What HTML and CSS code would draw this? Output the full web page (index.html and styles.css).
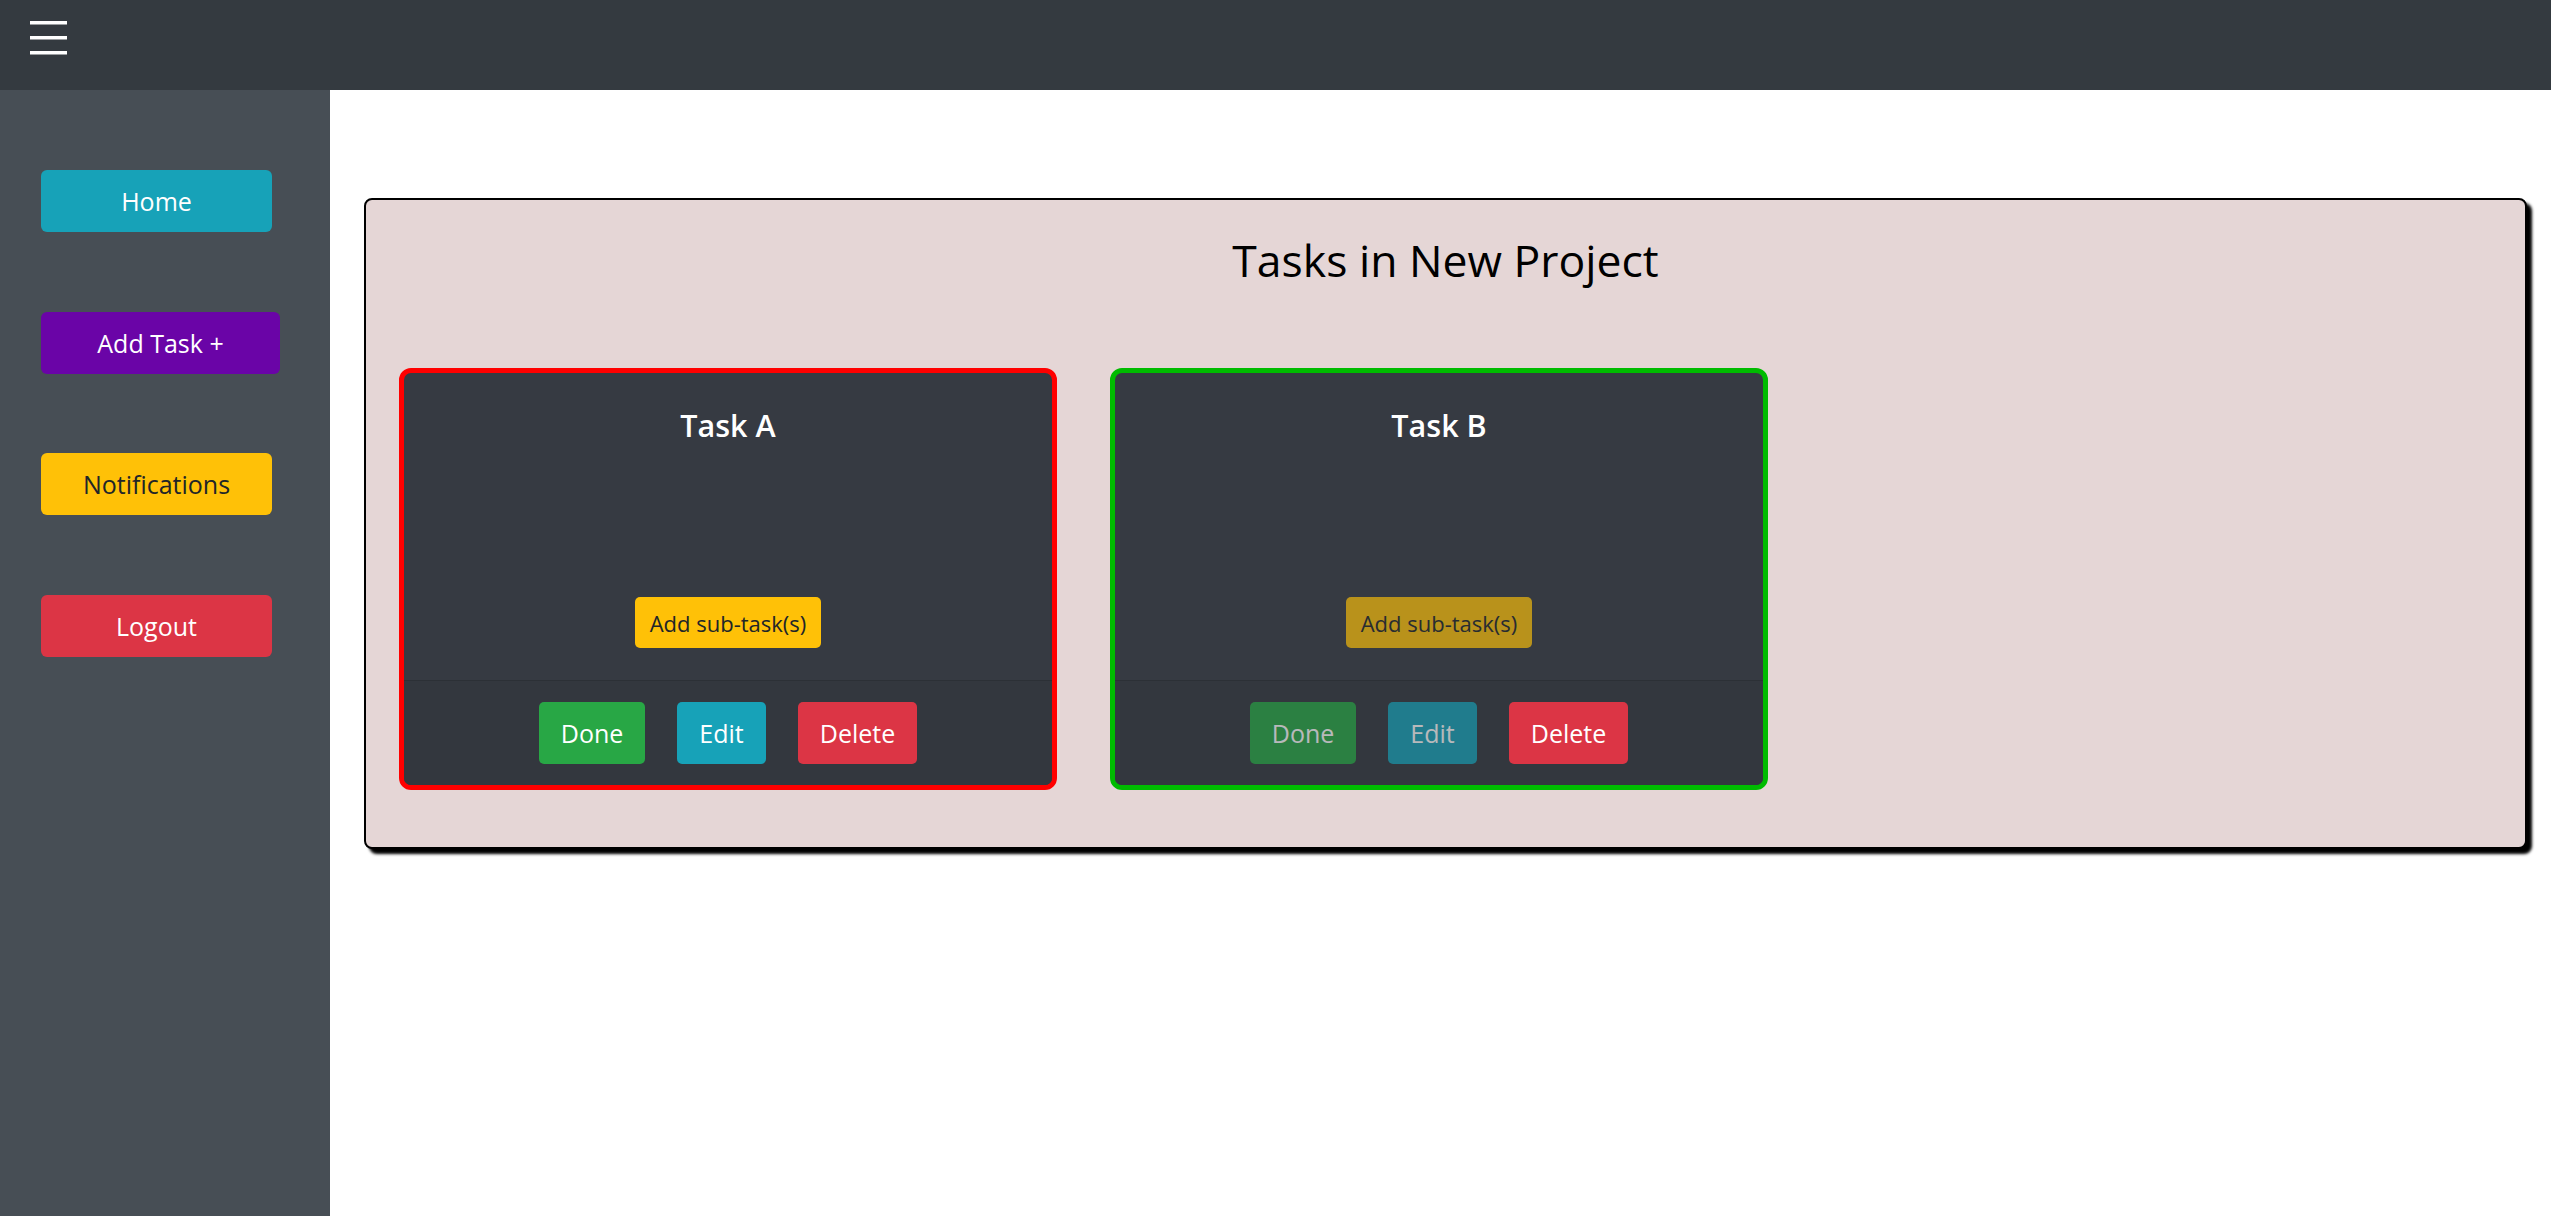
FILE: index.html
```html
<!DOCTYPE html>
<html lang="en">
<head>
<meta charset="utf-8">
<title>Tasks in New Project</title>
<link rel="stylesheet" href="styles.css">
</head>
<body>
<header class="topbar">
  <button class="menu-toggle" aria-label="Menu">
    <svg width="37" height="34" viewBox="0 0 37 34"><rect x="0" y="0" width="37" height="3.5" fill="#fff"/><rect x="0" y="15" width="37" height="3.5" fill="#fff"/><rect x="0" y="30" width="37" height="3.5" fill="#fff"/></svg>
  </button>
</header>
<div class="layout">
  <nav class="sidebar">
    <a class="side-btn btn-info">Home</a>
    <a class="side-btn btn-purple side-btn-wide">Add Task +</a>
    <a class="side-btn btn-warning">Notifications</a>
    <a class="side-btn btn-danger">Logout</a>
  </nav>
  <main class="content">
    <section class="project">
      <h1 class="project-title">Tasks in New Project</h1>
      <div class="task-row">
        <article class="task-card task-red">
          <div class="task-body">
            <h3 class="task-title">Task A</h3>
            <button class="btn btn-warning btn-sub">Add sub-task(s)</button>
          </div>
          <div class="task-footer">
            <button class="btn btn-success">Done</button>
            <button class="btn btn-info">Edit</button>
            <button class="btn btn-danger">Delete</button>
          </div>
        </article>
        <article class="task-card task-green">
          <div class="task-body">
            <h3 class="task-title">Task B</h3>
            <button class="btn btn-warning btn-sub disabled">Add sub-task(s)</button>
          </div>
          <div class="task-footer">
            <button class="btn btn-success disabled">Done</button>
            <button class="btn btn-info disabled">Edit</button>
            <button class="btn btn-danger">Delete</button>
          </div>
        </article>
      </div>
    </section>
  </main>
</div>
</body>
</html>
```

FILE: styles.css
```css
* { box-sizing: border-box; }

html, body {
  margin: 0;
  padding: 0;
  height: 100%;
}

body {
  font-family: "Open Sans", "Noto Sans", "Liberation Sans", sans-serif;
  background: #fff;
  color: #000;
  display: flex;
  flex-direction: column;
}

.topbar {
  height: 90px;
  flex: 0 0 90px;
  background: #343a40;
  display: flex;
  align-items: flex-start;
  padding-left: 30px;
  padding-top: 21px;
}

.menu-toggle {
  background: none;
  border: 0;
  padding: 0;
  margin: 0;
  display: block;
  line-height: 0;
}

.layout {
  flex: 1;
  display: flex;
}

.sidebar {
  width: 330px;
  flex: 0 0 330px;
  background: #474e55;
  display: flex;
  flex-direction: column;
  align-items: flex-start;
  padding: 80px 0 0 41px;
  gap: 79.5px;
}

.side-btn {
  display: flex;
  align-items: center;
  justify-content: center;
  width: 231px;
  height: 62px;
  border-radius: 6px;
  font-size: 25px;
  color: #fff;
  text-decoration: none;
}

.side-btn-wide { width: 239px; }

.btn-info { background: #17a2b8; color: #fff; }
.btn-purple { background: #6a04a7; color: #fff; }
.btn-warning { background: #ffc107; color: #212529; }
.btn-danger { background: #dc3545; color: #fff; }
.btn-success { background: #28a745; color: #fff; }

.content {
  flex: 1;
  padding: 108px 24px 0 34px;
}

.project {
  background: #e5d6d6;
  border: 2px solid #000;
  border-radius: 8px;
  box-shadow: 5px 5px 3px #000;
  padding: 0 33px 57px;
}

.project-title {
  margin: 0;
  padding-top: 30px;
  font-size: 44.5px;
  line-height: 60px;
  font-weight: 500;
  text-align: center;
}

.task-row {
  margin-top: 78px;
  display: flex;
  gap: 53px;
}

.task-card {
  width: 658px;
  height: 422px;
  border: 5px solid;
  border-radius: 12px;
  background: #363a42;
  display: flex;
  flex-direction: column;
  overflow: hidden;
}

.task-red { border-color: #ff0000; }
.task-green { border-color: #00bb00; }

.task-body {
  flex: 1;
  display: flex;
  flex-direction: column;
  align-items: center;
  justify-content: space-between;
  padding: 31px 0 32px;
}

.task-title {
  margin: 0;
  color: #fff;
  font-size: 30.5px;
  line-height: 42px;
  font-weight: 600;
}

.btn {
  border: 0;
  border-radius: 5px;
  font-family: inherit;
  cursor: pointer;
}

.btn-sub {
  height: 51px;
  padding: 0 15px;
  font-size: 22px;
}

.task-footer {
  height: 105px;
  flex: 0 0 105px;
  border-top: 1px solid #2c3036;
  background: #33373e;
  display: flex;
  align-items: center;
  justify-content: center;
  gap: 32px;
}

.task-footer .btn {
  height: 62px;
  padding: 0 22px;
  font-size: 25px;
}

.disabled { opacity: 0.65; }
```
